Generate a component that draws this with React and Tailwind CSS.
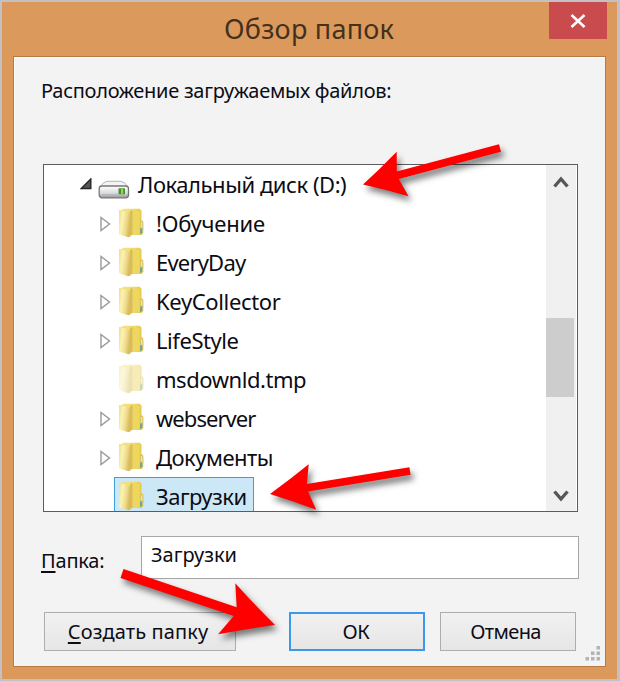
import React from "react";

const rows = [
  { name: "!Обучение", arrow: true, cls: "tracking-[-0.2px]" },
  { name: "EveryDay", arrow: true, cls: "tracking-[-0.8px]" },
  { name: "KeyCollector", arrow: true, cls: "tracking-[-0.35px]" },
  { name: "LifeStyle", arrow: true, cls: "tracking-[-0.45px]" },
  { name: "msdownld.tmp", arrow: false, faded: true, cls: "tracking-[-0.45px]" },
  { name: "webserver", arrow: true, cls: "tracking-[-0.95px]" },
  { name: "Документы", arrow: true, cls: "tracking-[-0.5px]" },
];

function Folder({ faded }) {
  return (
    <svg className={faded ? "mb-[2px] shrink-0 opacity-45" : "mb-[2px] shrink-0"} width="26" height="30" viewBox="0 0 26 30">
      <defs>
        <linearGradient id="folderBack" x1="0" x2="1">
          <stop offset="0" stopColor="#f4e285" />
          <stop offset=".55" stopColor="#f0dc74" />
          <stop offset="1" stopColor="#e2c544" />
        </linearGradient>
        <linearGradient id="folderFlap" x1="0" x2="1" y2=".3">
          <stop offset="0" stopColor="#f0dd80" />
          <stop offset=".35" stopColor="#fbf2b4" />
          <stop offset=".7" stopColor="#efdc8c" />
          <stop offset="1" stopColor="#d9bc5c" />
        </linearGradient>
      </defs>
      <path d="M2 2.5 L6 .8 H21.5 L23.5 2.5 V12 L25.3 13.5 V25 L23.5 27 H9 L2 26 Z" fill="url(#folderBack)" />
      <path d="M12 3 L14.5 2 V27 L12 28 Z" fill="#c9a93c" opacity=".6" />
      <path d="M15 3 H21.5 V26 H15 Z" fill="#efd75e" />
      <path d="M1 2 L11 4.5 Q12.5 5 12.5 7 V28.5 L10.5 29.2 L2 26.8 Q1 26.5 1 25.5 Z" fill="url(#folderFlap)" />
      <path d="M22.5 13.5 Q24.5 13 24.8 15 V22 L22.5 26 Z" fill="#e8e6b0" stroke="#cdb758" strokeWidth=".6" />
      <path d="M22 21 L24.2 19.5 V25 L22 26 Z" fill="#6ea6a0" />
    </svg>
  );
}

function Drive() {
  return (
    <svg className="shrink-0" width="32" height="19" viewBox="0 0 32 19">
      <defs>
        <linearGradient id="driveFace" x1="0" x2="0" y1="0" y2="1">
          <stop offset="0" stopColor="#ffffff" />
          <stop offset=".6" stopColor="#dcdcdf" />
          <stop offset="1" stopColor="#929296" />
        </linearGradient>
      </defs>
      <path d="M2 7 Q5 2 9 1.3 H23 Q27 2 30 7 Z" fill="#f4f4f5" stroke="#b4b4b6" />
      <rect x="1.2" y="6" width="29.3" height="11.8" rx="2.8" fill="url(#driveFace)" stroke="#77777a" strokeWidth="1.3" />
      <path d="M4 14.5 H19" stroke="#b9b9bc" strokeWidth="1" />
      <rect x="20.5" y="8.3" width="6.5" height="6" fill="#4b8d38" />
      <rect x="23" y="8.8" width="2.2" height="5" fill="#8fe03c" />
    </svg>
  );
}

function Pointer({ box, from, to }) {
  const dx = to[0] - from[0];
  const dy = to[1] - from[1];
  const len = Math.hypot(dx, dy);
  const angle = (Math.atan2(dy, dx) * 180) / Math.PI;
  const { head, notch, half, shaft } = box;
  return (
    <g transform={`translate(${from[0]} ${from[1]}) rotate(${angle})`}>
      <path
        d={`M0 ${-shaft} H${len - notch} L${len - head} ${-half} Q${len - head / 2} ${-half / 2.15} ${len} 0 Q${len - head / 2} ${half / 2.15} ${len - head} ${half} L${len - notch} ${shaft} H0 Z`}
        fill="#fe0000"
      />
    </g>
  );
}

export default function App() {
  return (
    <div className="relative h-[681px] w-[620px] overflow-hidden border-2 border-r-[3px] border-[#c3c1c4] bg-[#db9a5c] font-['Noto_Sans','Open_Sans',sans-serif] text-[#0c0c14]">
      <header className="flex h-[54px] items-start pl-[222px]">
        <h1 className="mt-[7px] w-[325px] whitespace-nowrap text-[27px] leading-[40px] tracking-[0.25px] text-[#44301d]">Обзор папок</h1>
        <button className="flex h-[37px] w-[58px] shrink-0 items-center justify-center bg-[#c94b4d]">
          <svg width="16" height="14" viewBox="0 0 16 14">
            <path d="M1.5 1 L14.5 13 M14.5 1 L1.5 13" stroke="#fff" strokeWidth="2.6" />
          </svg>
        </button>
      </header>
      <main className="ml-[11px] h-[611px] w-[593px] border border-[#b87b43] bg-[#f3f3f3] pl-[29px] shadow-[inset_1px_1px_0_#fdfdfd]">
        <p className="-ml-[2px] h-[107px] whitespace-nowrap pt-[19px] text-[20px] leading-[30px] tracking-[-0.28px]">Расположение загружаемых файлов:</p>
        <section className="flex h-[348px] w-[535px] justify-between overflow-hidden border-[1.5px] border-[#5c5c5c] bg-white text-[22px]">
          <div className="flex flex-col">
            <div className="flex h-[39px] shrink-0 items-center pl-[36px]">
              <svg className="mb-px shrink-0" width="12" height="12" viewBox="0 0 12 12">
                <path d="M10.8 1 V10.5 H1.3 Z" fill="#555" stroke="#262626" strokeWidth="1.4" />
              </svg>
              <div className="mt-[10px] ml-[6px] flex">
                <Drive />
              </div>
              <span className="ml-[8px] whitespace-nowrap tracking-[-0.45px]">Локальный диск (D:)</span>
            </div>
            {rows.map((r) => (
              <div key={r.name} className="flex h-[39px] shrink-0 items-center pl-[56px]">
                <span className="w-[18px]">
                  {r.arrow && (
                    <svg width="11" height="16" viewBox="0 0 11 16">
                      <path d="M1 1.5 L9.5 8 L1 14.5 Z" fill="#fff" stroke="#999" strokeWidth="1.4" />
                    </svg>
                  )}
                </span>
                <Folder faded={r.faded} />
                <span className={"ml-[12px] whitespace-nowrap " + r.cls}>{r.name}</span>
              </div>
            ))}
            <div className="ml-[70px] flex h-[39px] w-[140px] shrink-0 items-center border-[1.5px] border-[#3b9fd8] bg-[#cce8f7] pl-[3px]">
              <Folder />
              <span className="ml-[12px] whitespace-nowrap tracking-[-0.5px]">Загрузки</span>
            </div>
          </div>
          <div className="mr-[1px] flex w-[30px] flex-col items-center bg-[#f0f0f0]">
            <svg className="mt-[10px]" width="16" height="14" viewBox="0 0 16 14">
              <path d="M1.5 11.5 L8 4 L14.5 11.5" fill="none" stroke="#565656" strokeWidth="3.4" />
            </svg>
            <div className="mt-[129px] mr-[2px] h-[79px] w-[28px] bg-[#cdcdcd]" />
            <svg className="mt-[92px]" width="16" height="14" viewBox="0 0 16 14">
              <path d="M1.5 2.5 L8 10 L14.5 2.5" fill="none" stroke="#565656" strokeWidth="3.4" />
            </svg>
          </div>
        </section>
        <div className="mt-[24px] flex text-[20px]">
          <label className="-ml-[2px] mt-[11px] w-[100px] whitespace-nowrap leading-[28px] tracking-[-0.2px]"><u className="decoration-[1.5px] underline-offset-[3px]">П</u>апка:</label>
          <div className="h-[43px] w-[438px] border-[1.5px] border-[#a6a6a6] bg-white pl-[9px] leading-[36px] tracking-[0px]">Загрузки</div>
        </div>
        <div className="mt-[33px] flex text-[20px] leading-[28px]">
          <button className="ml-[1px] h-[39px] w-[192px] whitespace-nowrap border-[1.5px] border-[#adadad] bg-linear-to-b from-[#f1f1f1] to-[#e6e6e6] pr-[4px] tracking-[0.1px]"><u className="decoration-[1.5px] underline-offset-[3px]">С</u>оздать папку</button>
          <button className="ml-[53px] h-[39px] w-[136px] border-2 border-[#3f97ea] bg-linear-to-b from-[#f1f1f1] to-[#e6e6e6] pr-[2px] tracking-[-0.3px]">ОК</button>
          <button className="ml-[15px] h-[39px] w-[136px] border-[1.5px] border-[#adadad] bg-linear-to-b from-[#f1f1f1] to-[#e6e6e6] pr-[5px] tracking-[-0.6px]">Отмена</button>
          <svg className="mt-[34px] ml-[9px]" width="16" height="16" viewBox="0 0 16 16" fill="#b4b4b4">
            <path d="M11.5 0h3.5v3.5h-3.5z M11.5 5.5h3.5v3.5h-3.5z M6 5.5h3.5v3.5h-3.5z M11.5 11h3.5v3.5h-3.5z M6 11h3.5v3.5h-3.5z M.5 11h3.5v3.5h-3.5z" />
          </svg>
        </div>
      </main>
      <svg className="pointer-events-none absolute -top-[2px] -left-[2px] drop-shadow-[3px_5px_3px_rgba(0,0,0,0.5)]" width="620" height="681" viewBox="0 0 620 681">
        <Pointer from={[500, 148]} to={[363, 184.5]} box={{ head: 41, notch: 36, half: 23, shaft: 3.8 }} />
        <Pointer from={[410, 471]} to={[270, 494]} box={{ head: 43, notch: 38, half: 23, shaft: 3.8 }} />
        <Pointer from={[122, 573.5]} to={[275, 625]} box={{ head: 51, notch: 42, half: 27, shaft: 4.7 }} />
      </svg>
    </div>
  );
}
